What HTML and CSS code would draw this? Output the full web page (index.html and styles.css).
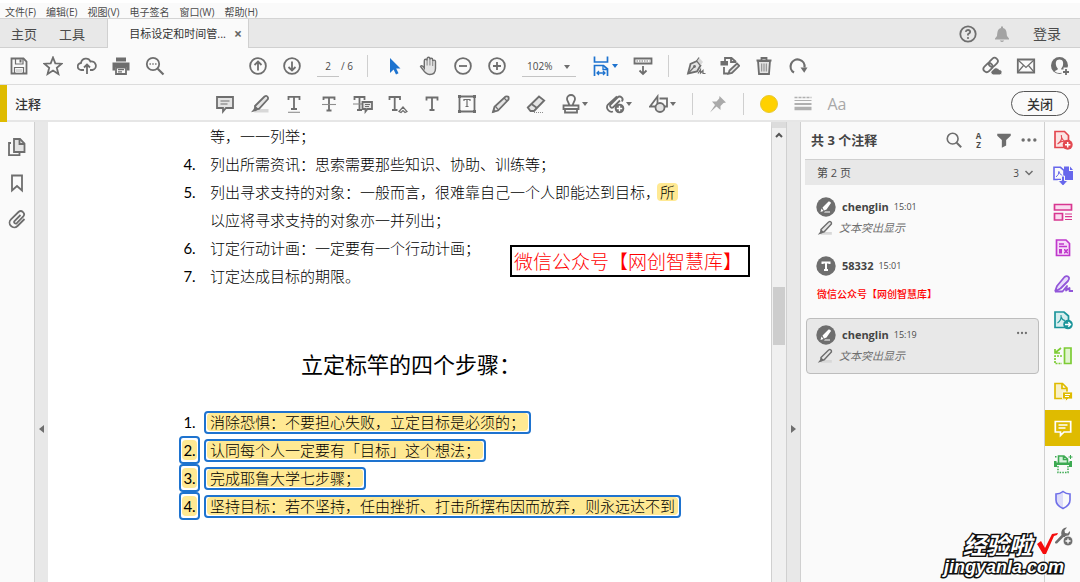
FILE: index.html
```html
<!DOCTYPE html>
<html lang="zh-CN">
<head>
<meta charset="utf-8">
<meta name="viewport" content="width=device-width, initial-scale=1">
<title>目标设定和时间管理</title>
<link rel="stylesheet" href="styles.css">
</head>
<body>
<svg class="sprite" aria-hidden="true">
  <symbol id="save" viewBox="0 0 20 20"><path class="s" d="M2.500 2.500H14.500L17.500 5.500V17.500H2.500Z"/><path class="s t" d="M6.500 2.500V8H14V2.500M5.500 17.500V11.500H14.500V17.500"/><path class="l" d="M7 13h6v4H7z"/><path class="f" d="M10.500 3.500h2V6.500h-2z"/></symbol>
  <symbol id="star" viewBox="0 0 20 20"><path class="s" d="M10 1.500 12.300 7.300 18.700 7.700 13.800 11.800 15.400 18 10 14.600 4.600 18 6.200 11.800 1.300 7.700 7.700 7.300Z"/></symbol>
  <symbol id="upload" viewBox="0 0 20 20"><path class="s" d="M7 14H4.500A3.500 3.500 0 0 1 4 7 5 5 0 0 1 13.500 5.500 4.200 4.200 0 0 1 15.500 14H13M10 18V9M7 11.500 10 8.500 13 11.500"/></symbol>
  <symbol id="print" viewBox="0 0 20 20"><path class="f" d="M5 1.500h10v4H5zM1.500 6.500h17v8H16V11H4v3.500H1.500z"/><path class="s" d="M5 11.500h10v6.500H5z"/><path class="s t" d="M7 13.700h6M7 15.800h4"/></symbol>
  <symbol id="find" viewBox="0 0 20 20"><circle class="s" cx="8" cy="8" r="6.200"/><path class="s w" d="M12.700 12.700 18.500 18.500"/><path class="f" d="M4.500 7.300h1.400v1.400H4.500zM7.300 7.300h1.400v1.400H7.300zM10.100 7.300h1.400v1.400h-1.400z"/></symbol>
  <symbol id="up" viewBox="0 0 20 20"><circle class="s" cx="10" cy="10" r="7.900"/><path class="s" d="M10 14.500V6M6.500 9 10 5.500 13.500 9"/></symbol>
  <symbol id="down" viewBox="0 0 20 20"><circle class="s" cx="10" cy="10" r="7.900"/><path class="s" d="M10 5.500V14M6.500 11 10 14.500 13.500 11"/></symbol>
  <symbol id="arrow" viewBox="0 0 20 20"><path fill="#1e73cf" d="M5 2V17L8.600 13.600 11 18.500 13.500 17.200 11.200 12.600H15.500Z"/></symbol>
  <symbol id="hand" viewBox="0 0 20 20"><path class="s l2 h" d="M5.300 12V4.700a1.400 1.400 0 0 1 2.800 0V2.700a1.400 1.400 0 0 1 2.800 0V3.700a1.400 1.400 0 0 1 2.800 0V5.500a1.400 1.400 0 0 1 2.800 0V12.500c0 4-2.500 6-5.800 6-3.700 0-5-2-6.700-4.800L1.500 10.500c.8-1.300 2.200-.8 3.800 1.500Z"/><path class="s n" d="M8.100 4.700V9.500M10.900 3.700V9.500M13.700 5.500V10"/></symbol>
  <symbol id="minus" viewBox="0 0 20 20"><circle class="s" cx="10" cy="10" r="7.900"/><path class="s" d="M6 10h8"/></symbol>
  <symbol id="plus" viewBox="0 0 20 20"><circle class="s" cx="10" cy="10" r="7.900"/><path class="s" d="M6 10h8M10 6v8"/></symbol>
  <symbol id="fit" viewBox="0 0 20 20"><g fill="none" stroke="#1e73cf" stroke-width="1.700"><path d="M3.500 .5V6H16.500V.5M3.500 20V9.500H12.500L16.500 13V20"/><path d="M12 9.500V13.500H16.500M6 17H14M8 15 6 17 8 19M12 15 14 17 12 19" stroke-width="1.300"/></g></symbol>
  <symbol id="keys" viewBox="0 0 20 20"><path class="s" d="M1.500 2.500h17v5h-17z"/><path class="s t" stroke-dasharray="1.500 1" d="M3.500 5h13"/><path class="s" d="M10 10V17.500M6.500 14.500 10 18 13.500 14.500"/></symbol>
  <symbol id="sign" viewBox="0 0 20 20"><path class="s l2" d="M2 17.500 4.500 8 11 5 14.500 9.500 11 15.500Z"/><path class="l" d="M11 4.500 13 1.500 17 6 14.800 9Z"/><path class="s t" d="M10.500 5 13 1.500M2 17.500 8 11"/><circle class="f" cx="8.500" cy="10.500" r="1.400"/><path class="s t" d="M12 17.500 14.500 13.500V17L17 14.500V17.500H19.500"/></symbol>
  <symbol id="edit" viewBox="0 0 20 20"><path class="s" d="M5 5V2H11.500L15.500 5.500V7M4 11V17.500H8M11 2V6H15"/><path class="f" d="M.5 5H8V9.500H.5z"/><path class="s l2" d="M8.500 17.800 9.500 14.500 17 7.500 19.300 9.800 12 17Z"/></symbol>
  <symbol id="trash" viewBox="0 0 20 20"><path class="s l2" d="M4 5H16L15 18H5Z"/><path class="s" d="M2.500 4.500H17.500M7.500 4V2H12.500V4"/><path class="s n" d="M7.700 7.500V15.500M10 7.500V15.500M12.300 7.500V15.500"/></symbol>
  <symbol id="redo" viewBox="0 0 20 20"><path class="s w" d="M6 16.500A7 7 0 1 1 16.500 11.500"/><path class="f" d="M12.500 11.500 19.500 11.500 16.200 16.800Z"/></symbol>
  <symbol id="link" viewBox="0 0 20 20"><g class="s" transform="rotate(-45 9 9)"><rect x="0" y="5.500" width="10" height="6.500" rx="3.200"/><rect x="7.500" y="5.500" width="10" height="6.500" rx="3.200"/></g><path class="f" stroke="#fafafa" d="M11 19a2.700 2.700 0 0 1 0-5.300 3.300 3.300 0 0 1 6-.2 2.800 2.800 0 0 1 1 5.500Z"/></symbol>
  <symbol id="mail" viewBox="0 0 20 20"><path class="s" d="M1.800 3.500H18.200V16.500H1.800Z"/><path class="s t" d="M2 4 10 11.500 18 4M2 16 7.500 9.500M18 16 12.500 9.500"/></symbol>
  <symbol id="user" viewBox="0 0 20 20"><circle class="f" cx="9.500" cy="9.500" r="8.500"/><path fill="#fafafa" d="M9.500 3.500C6 3.500 5.500 6.500 6 9 6.300 10.800 7 11.500 7.700 12.300V13.500L4.500 15.200Q9.500 19 14.500 15.200L11.300 13.500V12.300C12 11.500 12.700 10.800 13 9 13.500 6.500 13 3.500 9.500 3.500Z"/><path stroke="#fafafa" stroke-width="5" d="M16 11.500v8.500M11.700 16H20"/><path class="s" d="M16 13v6M13 16h6"/></symbol>
  <symbol id="note" viewBox="0 0 20 20"><path class="s l2" d="M2 3H18V14H11L8 17.500V14H2Z"/><path class="s t" d="M5.500 7H14.500M5.500 10H12.500"/></symbol>
  <symbol id="marker" viewBox="0 0 20 20"><path class="l" d="M7 15h11.500v3.500H4z"/><path class="s l2" d="M5 12 14.500 2.500Q17 1 18 3.500L18 5 9 14.800 5.500 15Z"/><path class="f" d="M5 11.500 8.800 15.200 6 17 1 18.300 3.700 15Z"/></symbol>
  <symbol id="under" viewBox="0 0 20 20"><path class="s" d="M4.500 6V2.800H15.500V6M10 2.800V15M7 15H13"/><path class="s n" d="M4 18.300H16"/></symbol>
  <symbol id="strike" viewBox="0 0 20 20"><path class="s" d="M4.500 6V3.500H15.500V6M10 3.500V16.500M7.500 16.500H12.500"/><path class="s n" d="M3 10.500H17"/></symbol>
  <symbol id="replace" viewBox="0 0 20 20"><path class="s" d="M1.500 6V3H11.500V6M6.500 3V16M4 16H9"/><path class="s n" d="M0 10H9"/><path class="s l2" d="M9.500 8H19V15H14.500L12.500 17.500V15H9.500Z"/><path class="s t" d="M12 10.500h5M12 12.500h4"/></symbol>
  <symbol id="insert" viewBox="0 0 20 20"><path class="s" d="M1.500 6V3H12V6M6.700 3V16M4 16H9.500"/><path class="s t" d="M11 17.500 15 13 19 17.500 17 18.500 15 16.500 13 18.500Z"/></symbol>
  <symbol id="text" viewBox="0 0 20 20"><path class="s" d="M4.500 6.500V3.500H15.500V6.500M10 3.500V16M7.500 16H12.500"/></symbol>
  <symbol id="box" viewBox="0 0 20 20"><path class="s" d="M2.500 2.500h15v15h-15z"/><path class="f" d="M1 1h3v3H1zM16 1h3v3h-3zM1 16h3v3H1zM16 16h3v3h-3z"/><path class="s t" d="M7 7V5.500H13V7M10 5.500V12.500M8.500 12.500H11.500"/></symbol>
  <symbol id="pencil" viewBox="0 0 20 20"><path class="s l2" d="M2 18 3.500 12.800 14.500 2.500Q18.500 1.500 17.500 5.500L7 16.500Z"/><path class="s t" d="M4.500 12.500 7.500 15.800M13 4 16 7"/><path class="f" d="M1 19 2.500 14.500 5.500 17.500Z"/></symbol>
  <symbol id="eraser" viewBox="0 0 20 20"><path class="s l2" d="M1.800 13.500 13 2.500 18.200 6.500 8 17H4.500Z"/><path class="s" d="M5.500 10 11 14"/><path class="s n" stroke-dasharray="1 1" d="M8 18.500H18"/></symbol>
  <symbol id="stamp" viewBox="0 0 20 20"><path class="s" d="M8 11.500C8.700 9 6 7.500 6 5a4 4 0 0 1 8 0C14 7.500 11.300 9 12 11.500M2.500 15V11.500H17.500V15Z"/><path class="s" d="M4 15.500V18.500H16V15.500"/></symbol>
  <symbol id="attach" viewBox="0 0 20 20"><path class="s" d="M15 6.500 8 13.500A2 2 0 0 1 5.300 10.800L12.500 3.500A2.800 2.800 0 0 1 16.700 7.500M12 2.500 3 10.500A4.500 4.500 0 0 0 8 17.500"/><circle class="f" cx="14.500" cy="14.500" r="4.800"/><path stroke="#fff" stroke-width="1.400" d="M11.800 14.500h5.400M14.500 11.800v5.400"/></symbol>
  <symbol id="shapes" viewBox="0 0 20 20"><path class="s" d="M1 12.500 8.500 2.500V12.500ZM10.500 4.500H18V12.500H15"/><circle class="s l2" cx="11" cy="13.500" r="4.500"/></symbol>
  <symbol id="pin" viewBox="0 0 20 20"><path fill="#aaa" d="M11.500 2 18 8.500 15.500 9 12.500 12 12.500 16 8.500 12.500 2 18.500 7 11 4 7.500 8.500 7.500 11.200 4.500Z"/></symbol>
  <symbol id="lines" viewBox="0 0 20 20"><g stroke="#b0b0b0"><path stroke-dasharray="3 1" stroke-width="1.500" d="M1.500 3.500h17"/><path d="M1.500 6.500h17"/><path stroke-width="2" d="M1.500 10h17"/><path stroke-width="3.500" d="M1.500 14.500h17"/></g></symbol>
  <symbol id="help" viewBox="0 0 20 20"><circle class="s" cx="10" cy="10" r="7.700"/><path class="s" d="M7.700 7.800Q8 6 10 6T12.200 8Q12.200 9 10 10.300V11.500"/><circle class="f" cx="10" cy="14" r="1.100"/></symbol>
  <symbol id="bell" viewBox="0 0 20 20"><path fill="#a3a3a3" d="M9 2.500h2V4C15 5 14.500 9 15 12L17 14.500V15.500H3V14.500L5 12C5.500 9 5 5 9 4ZM7.800 16.500h4.400Q10 19.500 7.800 16.500Z"/></symbol>
  <symbol id="pages" viewBox="0 0 20 20"><path class="s l2" d="M7 2H13L17.500 6.500V15H7Z"/><path class="s" d="M12.500 2V7H17.500M4 6H2V18.200H12.500V16"/></symbol>
  <symbol id="bookmark" viewBox="0 0 20 20"><path class="s" d="M5 2.500H15V17.500L10 13 5 17.500Z"/></symbol>
  <symbol id="clip" viewBox="0 0 20 20"><path class="s" d="M13.500 6 7.500 12A1.600 1.600 0 0 0 9.800 14.200L16.300 7.500A3.300 3.300 0 0 0 11.500 3L4 10.300A4.600 4.600 0 0 0 10.500 17L17.500 10"/></symbol>
  <symbol id="search" viewBox="0 0 20 20"><circle class="s" cx="8.500" cy="8.500" r="6"/><path class="s w" d="M13 13 18 18"/></symbol>
  <symbol id="filter" viewBox="0 0 20 20"><path class="f" d="M2.500 3H17.500V5.200L12.400 10V16L7.600 18.500V10L2.500 5.200Z"/></symbol>
  <symbol id="dots" viewBox="0 0 20 20"><circle class="f" cx="3.500" cy="10" r="1.900"/><circle class="f" cx="10" cy="10" r="1.900"/><circle class="f" cx="16.500" cy="10" r="1.900"/></symbol>
  <symbol id="chev" viewBox="0 0 20 20"><path class="s x" d="M3 6 10 13 17 6"/></symbol>
  <symbol id="av-marker" viewBox="0 0 20 20"><circle class="f" cx="10" cy="10" r="9.700"/><path fill="#fff" d="M6.500 10.500 12.500 4.500Q14.500 4 15 6L10.500 12.500 8 13.500ZM5.500 11.500 7.500 14 4.500 15ZM9 14.500H14V15.500H8Z"/></symbol>
  <symbol id="av-text" viewBox="0 0 20 20"><circle class="f" cx="10" cy="10" r="9.700"/><path fill="none" stroke="#fff" stroke-width="2" d="M6.500 8V6.500H13.500V8M10 6.500V14M8 14H12"/></symbol>
  <symbol id="r-create" viewBox="0 0 20 20"><g fill="#fbe3e3" stroke="#e34850" stroke-width="1.700"><path d="M2 1.500H11.500L15.500 5.500V17.500H2Z"/><path fill="none" stroke-width="1.100" d="M4.500 14C8 12 9 8 8.300 5M8.300 6Q9 11 13.500 11.500M5 13.500Q9 10.500 13 11.500"/></g><circle cx="14.700" cy="14.700" r="5" fill="#e34850"/><path stroke="#fff" stroke-width="1.500" d="M12 14.700h5.400M14.700 12v5.400"/></symbol>
  <symbol id="r-export" viewBox="0 0 20 20"><path fill="#6767ec" d="M11 .5h5V5h4v9h-9z"/><path fill="#6767ec" d="M17 .5 20 4H17z"/><path fill="#fafafa" stroke="#6767ec" stroke-width="1.600" d="M1 1.300H7.500L11 4.500V13.500H1Z"/><path fill="none" stroke="#6767ec" d="M3 11Q6 9 6 5M6 6Q7 9 9.500 9.500"/><path fill="#6767ec" stroke="#fafafa" d="M8.500 10h3v4.500H15L10 20 5 14.500H8.500Z"/></symbol>
  <symbol id="r-org" viewBox="0 0 20 20"><g fill="#fadcf0" stroke="#d83790" stroke-width="1.700"><path d="M1.500 2.500h17v5.500h-17zM1.500 11.500h8v6.500h-8z"/><path stroke-width="1.200" d="M12 12h7M12 14.700h7M12 17.500h7"/></g></symbol>
  <symbol id="r-form" viewBox="0 0 20 20"><path fill="#f6dcf8" stroke="#c038cc" stroke-width="1.700" d="M3.500 2H13L16.500 5.500V17.500H3.500Z"/><path fill="none" stroke="#c038cc" stroke-width="1.300" d="M6 6h5M6 8.500h8"/><path fill="#c038cc" d="M6 11h3v4.500H6zM11 11h1l1 1 1-1h1v1.300l-1 1 1 1V15.500h-1l-1-1-1 1h-1V14.300l1-1-1-1z"/></symbol>
  <symbol id="r-sign" viewBox="0 0 20 20"><path fill="#e9ddfb" stroke="#9256d9" stroke-width="1.800" stroke-linejoin="round" d="M2 17.500 4 12 11.500 3Q14 1 16 3.500 16.500 5 15 7L7.500 14.500 2 17.500"/><path fill="none" stroke="#9256d9" stroke-width="1.800" stroke-linejoin="round" d="M2 17.500H9.500L14 12 13 16.500 16.500 14V17H20"/></symbol>
  <symbol id="r-send" viewBox="0 0 20 20"><path fill="#d8eeee" stroke="#1b959a" stroke-width="1.700" d="M2 2H11L15.500 6V17.500H2Z"/><path fill="none" stroke="#1b959a" stroke-width="1.100" d="M4.500 13C7.500 11 8.500 8 8 5M8.200 7Q9 10 12 10.500"/><circle cx="15" cy="14.500" r="4.800" fill="#1b959a"/><path fill="none" stroke="#fff" stroke-width="1.400" d="M12 14.500h5.500M15.300 12.300l2.200 2.200-2.200 2.200"/></symbol>
  <symbol id="r-comp" viewBox="0 0 20 20"><g fill="none" stroke="#7dcc35" stroke-width="1.700"><path fill="#e2f5d1" d="M11.500 2h6.500v15.500h-6.500z"/><path stroke-dasharray="2 1" d="M9 10H2V17.500H9"/><path d="M2 3V7H7M2.500 6.500 8 2"/></g></symbol>
  <symbol id="r-export2" viewBox="0 0 20 20"><path fill="#f8f0c6" stroke="#dfbb00" stroke-width="1.700" d="M2 1.500H9.500L14 6V16.500H2ZM9 1.500V6.500H14"/><path fill="#dfbb00" stroke="#fafafa" stroke-width=".8" d="M9.500 10H19.500V17H15L12.500 19.500V17H9.500Z"/><path stroke="#fff" d="M12 12.500h5M12 14.500h4"/></symbol>
  <symbol id="r-note" viewBox="0 0 20 20"><path fill="none" stroke="#fff" stroke-width="1.700" d="M2.300 3.500H17.700V14H11L7.500 17.500V14H2.300ZM5.500 7H14.500M5.500 10H12.500"/></symbol>
  <symbol id="r-scan" viewBox="0 0 20 20"><path fill="#d6f2dc" stroke="#3daa52" stroke-width="1.600" d="M5.500 9V2H11L14.500 5V9M10.500 2V5.500H14.500"/><path fill="#3daa52" d="M1 7H3.500V8.500H16.500V7H19V13H16V11H4V13H1zM2 2h1.500v1.500H2zM17 1h1v1.500h1.500v1H18V5h-1V3.500h-1.500v-1H17z"/><path fill="none" stroke="#3daa52" stroke-width="1.500" stroke-dasharray="1.500 1.200" d="M5 12V18.500H15V12"/></symbol>
  <symbol id="r-shield" viewBox="0 0 20 20"><path fill="#dddcf9" d="M10 2V18Q3 15 3 10V4Q7 4 10 2Z"/><path fill="none" stroke="#6e6ee8" stroke-width="1.600" d="M10 1.500Q13 4 17 4V10Q17 15.500 10 18.500 3 15.500 3 10V4Q7 4 10 1.500Z"/></symbol>
  <symbol id="r-tools" viewBox="0 0 20 20"><path class="f" d="M2 16 8.500 9C7.500 5 10 1 14 1.500L11.500 4.500 12 7 14.500 7.500 17 5C17.500 9 14 12 10.500 11L4 17.500Q1.500 18 2 16Z"/><circle class="f" cx="15" cy="15" r="5" stroke="#fafafa"/><path stroke="#fff" stroke-width="1.300" d="M12.500 15h5M15 12.500v5"/></symbol>
</svg>

<div class="app">
  <nav class="menu" aria-label="菜单">
    <button>文件(F)</button><button>编辑(E)</button><button>视图(V)</button><button>电子签名</button><button>窗口(W)</button><button>帮助(H)</button>
  </nav>

  <header class="tabs">
    <button class="nav-tab">主页</button>
    <button class="nav-tab">工具</button>
    <div class="doc-tab"><span>目标设定和时间管...</span><button class="tab-close" aria-label="关闭标签">×</button></div>
    <div class="account">
      <button class="ico" aria-label="帮助"><svg><use href="#help"/></svg></button>
      <button class="ico" aria-label="通知"><svg><use href="#bell"/></svg></button>
      <button class="login">登录</button>
    </div>
  </header>

  <div class="bar toolbar">
    <div class="group">
      <button class="ico" aria-label="保存"><svg><use href="#save"/></svg></button>
      <button class="ico" aria-label="收藏"><svg><use href="#star"/></svg></button>
      <button class="ico" aria-label="上传"><svg><use href="#upload"/></svg></button>
      <button class="ico" aria-label="打印"><svg><use href="#print"/></svg></button>
      <button class="ico" aria-label="查找"><svg><use href="#find"/></svg></button>
    </div>
    <div class="group paging">
      <button class="ico" aria-label="上一页"><svg><use href="#up"/></svg></button>
      <button class="ico" aria-label="下一页"><svg><use href="#down"/></svg></button>
      <input class="page-no" type="text" value="2" aria-label="页码"><span class="total">/ 6</span>
    </div>
    <span class="sep"></span>
    <div class="group view">
      <button class="ico" aria-label="选择"><svg><use href="#arrow"/></svg></button>
      <button class="ico" aria-label="手形"><svg><use href="#hand"/></svg></button>
      <button class="ico" aria-label="缩小"><svg><use href="#minus"/></svg></button>
      <button class="ico" aria-label="放大"><svg><use href="#plus"/></svg></button>
      <span class="zoom"><select aria-label="缩放"><option>102%</option></select></span>
      <button class="ico drop blue" aria-label="适合宽度"><svg><use href="#fit"/></svg></button>
      <button class="ico" aria-label="键盘"><svg><use href="#keys"/></svg></button>
    </div>
    <span class="sep"></span>
    <div class="group view">
      <button class="ico" aria-label="签名"><svg><use href="#sign"/></svg></button>
      <button class="ico" aria-label="编辑"><svg><use href="#edit"/></svg></button>
      <button class="ico" aria-label="删除"><svg><use href="#trash"/></svg></button>
      <button class="ico" aria-label="旋转"><svg><use href="#redo"/></svg></button>
    </div>
    <div class="group end">
      <button class="ico" aria-label="共享链接"><svg><use href="#link"/></svg></button>
      <button class="ico" aria-label="电子邮件"><svg><use href="#mail"/></svg></button>
      <button class="ico" aria-label="添加人员"><svg><use href="#user"/></svg></button>
    </div>
  </div>

  <div class="bar comment-bar">
    <h2 class="bar-title">注释</h2>
    <div class="group marks">
      <button class="ico" aria-label="附注"><svg><use href="#note"/></svg></button>
      <button class="ico" aria-label="高亮"><svg><use href="#marker"/></svg></button>
      <button class="ico" aria-label="下划线"><svg><use href="#under"/></svg></button>
      <button class="ico" aria-label="删除线"><svg><use href="#strike"/></svg></button>
      <button class="ico" aria-label="替换文本"><svg><use href="#replace"/></svg></button>
      <button class="ico" aria-label="插入文本"><svg><use href="#insert"/></svg></button>
      <button class="ico" aria-label="文本"><svg><use href="#text"/></svg></button>
      <button class="ico" aria-label="文本框"><svg><use href="#box"/></svg></button>
      <button class="ico" aria-label="铅笔"><svg><use href="#pencil"/></svg></button>
      <button class="ico" aria-label="橡皮"><svg><use href="#eraser"/></svg></button>
    </div>
    <div class="group drops">
      <button class="ico drop" aria-label="图章"><svg><use href="#stamp"/></svg></button>
      <button class="ico drop" aria-label="附件"><svg><use href="#attach"/></svg></button>
      <button class="ico drop" aria-label="形状"><svg><use href="#shapes"/></svg></button>
    </div>
    <span class="sep"></span>
    <div class="group view"><button class="ico" aria-label="固定"><svg><use href="#pin"/></svg></button></div>
    <span class="sep"></span>
    <div class="group view">
      <button class="ico" aria-label="颜色"><span class="swatch"></span></button>
      <button class="ico" aria-label="线宽"><svg><use href="#lines"/></svg></button>
      <button class="ico aa">Aa</button>
    </div>
    <button class="close">关闭</button>
  </div>

  <main class="main">
    <nav class="left-rail" aria-label="导览">
      <button class="ico" aria-label="页面"><svg><use href="#pages"/></svg></button>
      <button class="ico" aria-label="书签"><svg><use href="#bookmark"/></svg></button>
      <button class="ico" aria-label="附件列表"><svg><use href="#clip"/></svg></button>
    </nav>
    <button class="gutter left" aria-label="展开导览"></button>

    <article class="doc">
      <div class="rows">
        <span></span><p>等，一一列举；</p>
        <b>4.</b><p>列出所需资讯：思索需要那些知识、协助、训练等；</p>
        <b>5.</b><p>列出寻求支持的对象：一般而言，很难靠自己一个人即能达到目标，<mark>所</mark></p>
        <span></span><p>以应将寻求支持的对象亦一并列出；</p>
        <b>6.</b><p>订定行动计画：一定要有一个行动计画；</p>
        <b>7.</b><p>订定达成目标的期限。</p>
      </div>
      <h1>立定标竿的四个步骤：</h1>
      <div class="rows picked">
        <b>1.</b><p><span class="pick"><mark>消除恐惧：不要担心失败，立定目标是必须的；</mark></span></p>
        <b class="pick"><mark>2.</mark></b><p><span class="pick"><mark>认同每个人一定要有「目标」这个想法；</mark></span></p>
        <b class="pick"><mark>3.</mark></b><p><span class="pick"><mark>完成耶鲁大学七步骤；</mark></span></p>
        <b class="pick"><mark>4.</mark></b><p><span class="pick"><mark>坚持目标：若不坚持，任由挫折、打击所摆布因而放弃，则永远达不到</mark></span></p>
      </div>
      <div class="stamp-text">微信公众号【网创智慧库】</div>
    </article>
    <div class="scroll"><svg viewBox="0 0 14 14"><path d="M4 9 7 6 10 9" fill="none" stroke="#555" stroke-width="2"/></svg><span class="thumb"></span></div>
    <button class="gutter right" aria-label="折叠注释"></button>

    <aside class="panel">
      <header class="panel-head">
        <h2>共 3 个注释</h2>
        <button class="ico" aria-label="搜索注释"><svg><use href="#search"/></svg></button>
        <button class="ico sort" aria-label="排序"><span>A</span><span>Z</span></button>
        <button class="ico" aria-label="筛选"><svg><use href="#filter"/></svg></button>
        <button class="ico" aria-label="更多"><svg><use href="#dots"/></svg></button>
      </header>
      <button class="page-row"><span>第 2 页</span><span class="count">3</span><svg><use href="#chev"/></svg></button>
      <section class="card">
        <div class="who"><svg><use href="#av-marker"/></svg><strong>chenglin</strong><time>15:01</time></div>
        <div class="what"><svg><use href="#marker"/></svg><em>文本突出显示</em></div>
      </section>
      <section class="card">
        <div class="who"><svg><use href="#av-text"/></svg><strong>58332</strong><time>15:01</time></div>
        <p class="red">微信公众号【网创智慧库】</p>
      </section>
      <section class="card selected">
        <div class="who"><svg><use href="#av-marker"/></svg><strong>chenglin</strong><time>15:19</time><button class="more" aria-label="选项"><svg><use href="#dots"/></svg></button></div>
        <div class="what"><svg><use href="#marker"/></svg><em>文本突出显示</em></div>
      </section>
    </aside>

    <nav class="tool-rail" aria-label="工具">
      <button aria-label="创建 PDF"><svg><use href="#r-create"/></svg></button>
      <button aria-label="导出 PDF"><svg><use href="#r-export"/></svg></button>
      <button aria-label="组织页面"><svg><use href="#r-org"/></svg></button>
      <button aria-label="准备表单"><svg><use href="#r-form"/></svg></button>
      <button aria-label="填写和签名"><svg><use href="#r-sign"/></svg></button>
      <button aria-label="发送"><svg><use href="#r-send"/></svg></button>
      <button aria-label="比较文件"><svg><use href="#r-comp"/></svg></button>
      <button aria-label="发送以供注释"><svg><use href="#r-export2"/></svg></button>
      <button class="active" aria-label="注释工具"><svg><use href="#r-note"/></svg></button>
      <button aria-label="扫描"><svg><use href="#r-scan"/></svg></button>
      <button aria-label="保护"><svg><use href="#r-shield"/></svg></button>
      <button aria-label="更多工具"><svg><use href="#r-tools"/></svg></button>
    </nav>
  </main>

  <div class="watermark">
    <div class="mark-top"><span>经验啦</span><svg viewBox="0 0 22 24"><path d="M1 12 5 9 9 16 16 2 22 1 21 3 18 4 10 22 7 22Z" fill="#f50d0d"/></svg></div>
    <div class="mark-url">jingyanla.com</div>
  </div>
</div>
</body>
</html>
```

FILE: styles.css
```css
* { box-sizing: border-box; }

body {
  margin: 0;
  font: 11px/16px "Open Sans", "Noto Sans CJK SC", sans-serif;
  color: #4b4b4b;
  background: #fafafa;
}

h1, h2, p { margin: 0; }

button {
  padding: 0;
  border: 0;
  background: none;
  color: inherit;
  font: inherit;
}

.sprite { position: absolute; width: 0; height: 0; }
.s { fill: none; stroke: #6e6e6e; stroke-width: 1.8; }
.t { stroke-width: 1.2; }
.n { stroke: #8e8e8e; stroke-width: 1.1; }
.h { stroke-width: 1.4; }
.w { stroke-width: 2.2; }
.x { stroke-width: 3; }
.f { fill: #6e6e6e; }
.l { fill: #d8d8d8; }
.l2 { fill: #e4e4e4; }

.app {
  position: relative;
  display: flex;
  flex-direction: column;
  height: 100vh;
  overflow: hidden;
}

/* Menu and tabs */
.menu {
  display: flex;
  gap: 10px;
  height: 19px;
  padding: 2px 5px 0;
  border-top: 3px solid #fff;
  border-bottom: 1px solid #d4d4d4;
  font-size: 10px;
  line-height: 12px;
}

.tabs {
  display: flex;
  height: 29px;
  background: #e8e8e8;
  box-shadow: inset 0 -1px #d0d0d0;
  font-size: 13px;
}
.nav-tab { width: 48px; }
.doc-tab {
  display: flex;
  align-items: center;
  justify-content: flex-end;
  gap: 8px;
  width: 142px;
  margin-left: 11px;
  padding-right: 6px;
  background: #fafafa;
  border: solid #d0d0d0;
  border-width: 0 1px;
  font-size: 11px;
  color: #333;
  white-space: nowrap;
}
.tab-close { font-size: 14px; font-weight: 700; color: #666; }
.account { display: flex; align-items: center; margin-left: auto; padding-right: 19px; }
.login { margin-left: 14px; font-size: 14px; }

/* Tool bars */
.ico {
  display: inline-flex;
  align-items: center;
  justify-content: center;
  width: 34px;
  height: 28px;
}
.ico svg { width: 20px; height: 20px; flex: none; }

.bar { display: flex; align-items: center; height: 37px; border-bottom: 1px solid #dcdcdc; }
.group { display: flex; align-items: center; }
.toolbar { padding: 0 3px 0 2px; }
.paging { margin-left: 69px; }
.page-no {
  width: 22px;
  height: 22px;
  margin-left: 8px;
  padding: 0;
  border: 0;
  border-bottom: 1px solid #c4c4c4;
  background: none;
  font: inherit;
  font-size: 10px;
  text-align: center;
  color: inherit;
}
.total { width: 28px; padding-left: 2px; font-size: 10px; }
.sep { width: 1px; height: 22px; background: #cfcfcf; }
.view { margin-left: 10px; }
.zoom {
  position: relative;
  width: 54px;
  margin: 0 6px 0 8px;
  border-bottom: 1px solid #c4c4c4;
}
.zoom select {
  appearance: none;
  width: 100%;
  height: 21px;
  padding: 0 0 0 5px;
  border: 0;
  background: none;
  font: inherit;
  font-size: 10px;
  color: inherit;
}
.zoom::after, .drop::after {
  content: "";
  border: 3px solid transparent;
  border-top: 4px solid #6e6e6e;
  border-bottom: 0;
}
.zoom::after { position: absolute; right: 6px; top: 10px; }
.drop { width: 44px; gap: 1px; }
.drop.blue::after { border-top-color: #1e73cf; }
.toolbar .view + .sep { margin-left: 8px; }
.end { margin-left: auto; }

.comment-bar { border-left: 7px solid #dfbb00; border-bottom: 0; box-shadow: inset 0 -2px #e6e6e6; padding-right: 11px; }
.bar-title { width: 201px; padding-left: 8px; font-size: 13px; font-weight: 500; color: #333; }
.marks { display: grid; grid-template-columns: repeat(10, 1fr); width: 345px; }
.drops { margin: 0 8px 0 -1px; }
.comment-bar .view { margin-left: 8px; margin-right: 8px; }
.swatch { width: 18px; height: 18px; border-radius: 50%; background: #ffd100; border: 1px solid #e8c832; }
.aa { font-size: 16px; color: #a8a8a8; }
.close {
  width: 58px;
  height: 25px;
  margin-left: auto;
  border: 1px solid #555;
  border-radius: 13px;
  font-size: 13px;
  font-weight: 500;
  color: #333;
}

/* Work area */
.main { display: flex; flex: 1; min-height: 0; }
.left-rail { display: flex; flex-direction: column; width: 34px; padding-top: 7px; }
.left-rail .ico { height: 36px; }
.gutter {
  display: flex;
  align-items: center;
  justify-content: center;
  width: 14px;
  padding-top: 154px;
  background: #e8e8e8;
  border-left: 1px solid #d0d0d0;
}
.gutter::before { content: ""; border: 4px solid transparent; }
.left::before { border-right: 5px solid #6e6e6e; border-left: 0; }
.right::before { border-left: 5px solid #6e6e6e; border-right: 0; }

.doc {
  position: relative;
  flex: 1;
  min-width: 0;
  overflow: hidden;
  padding-left: 131px;
  background: #fff;
  color: #000;
  font: 300 15px/28px "Noto Sans CJK SC", sans-serif;
  white-space: nowrap;
}
.rows { display: grid; grid-template-columns: 21px auto; column-gap: 10px; justify-content: start; }
.rows b { font: 400 15px/28px Lato, "Open Sans", sans-serif; text-align: center; }
.doc h1 { margin: 57px 0 29px 122px; font-size: 22px; line-height: 32px; font-weight: 400; }
.doc mark { color: inherit; background: #ffe993; border-radius: 4px; padding: 0 3px; line-height: 18px; }
.rows > p > mark { display: inline-block; margin-left: -3px; }
.picked b, .picked p { display: flex; align-items: center; justify-content: center; height: 28px; }
.picked p { justify-content: flex-start; margin-left: -6px; }
.pick { display: flex; align-items: center; height: 23px; padding: 0 1px; border: 2px solid #1e73cf; border-radius: 4px; }
.picked b.pick { height: 28px; padding: 0; }
.picked b mark { padding: 1px; }

.stamp-text {
  position: absolute;
  left: 462px;
  top: 123px;
  width: 240px;
  padding: 0 2px;
  border: 2px solid #000;
  color: #f00;
  font-size: 19px;
}

.scroll {
  width: 15px;
  border-left: 1px solid #d0d0d0;
  border-top: 6px solid #dcdcdc;
  background: #f0f0f0;
}
.scroll svg { display: block; width: 14px; height: 14px; }
.thumb { display: block; height: 58px; margin: 145px 1px 0; background: #cdcdcd; }

/* Comment panel */
.panel { width: 244px; padding-left: 4px; border-left: 1px solid #d0d0d0; }
.panel-head { display: flex; align-items: center; height: 38px; padding: 0 3px 2px 6px; border-bottom: 1px solid #d0d0d0; }
.panel-head h2 { flex: 1; font-size: 13px; font-weight: 700; color: #444; }
.panel-head .ico { width: 25px; }
.panel-head .ico svg { width: 18px; height: 18px; }
.panel-head .sort { flex-direction: column; font-size: 8px; line-height: 9px; font-weight: 700; }
.page-row { display: flex; align-items: center; width: 100%; height: 25px; padding: 0 10px 0 12px; background: #e8e8e8; }
.page-row .count { margin-left: auto; font-size: 10px; }
.page-row svg { width: 10px; height: 10px; margin-left: 5px; }
.card { margin: 5px 5px 0 1px; padding: 6px 10px; border: 1px solid transparent; border-radius: 4px; }
.card + .card { margin-top: 3px; }
.card + .selected { margin-top: 7px; background: #e8e8e8; border-color: #bdbdbd; }
.who { display: flex; align-items: center; height: 20px; }
.who svg { width: 20px; height: 20px; margin: 0 6px 0 -1px; }
.who strong { color: #444; }
.who time { margin-left: 5px; font-size: 9px; }
.more { margin-left: auto; }
.who .more svg { width: 12px; height: 12px; margin: 0; }
.what { display: flex; align-items: center; gap: 6px; height: 22px; }
.what svg { width: 16px; height: 16px; }
.what em { color: #6e6e6e; }
.red { padding-top: 10px; height: 28px; color: #f00; font-size: 10px; font-weight: 500; }

.tool-rail { width: 36px; border-left: 1px solid #d0d0d0; overflow: hidden; }
.tool-rail button { display: flex; align-items: center; justify-content: center; width: 100%; height: 36px; }
.tool-rail svg { width: 20px; height: 20px; }
.tool-rail .active { background: #dfbb00; }

/* Site mark over the lower right corner */
.watermark {
  position: absolute;
  right: 16px;
  bottom: 6px;
  color: #fff;
  font-weight: 700;
  font-style: italic;
  -webkit-text-stroke: 3px #111;
  paint-order: stroke fill;
}
.mark-top { display: flex; justify-content: flex-end; gap: 4px; padding-right: 6px; font-size: 23px; line-height: 26px; }
.mark-top svg { width: 22px; height: 24px; }
.mark-url { font: italic 700 18px/18px "Liberation Sans", sans-serif; }
```
